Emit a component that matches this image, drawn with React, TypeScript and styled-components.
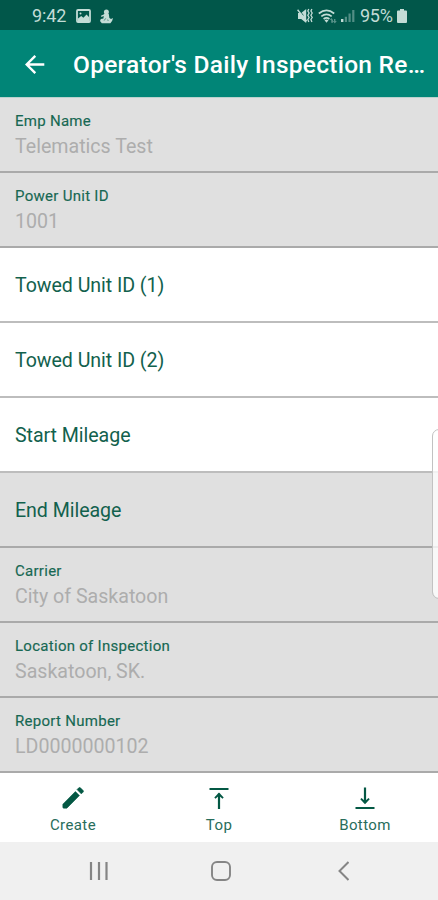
import React from 'react';
import styled, { createGlobalStyle } from 'styled-components';

const GlobalStyle = createGlobalStyle`
  * { box-sizing: border-box; }
  body { margin: 0; font-family: Roboto, "Liberation Sans", sans-serif; background: #fff; }
`;

const Screen = styled.div`
  position: relative;
  display: flex;
  flex-direction: column;
  width: 438px;
  height: 900px;
  overflow: hidden;
  background: #fff;
`;

const StatusBar = styled.div`
  display: flex;
  align-items: center;
  justify-content: space-between;
  height: 30px;
  padding: 2px 31px 0 32px;
  background: #01574a;
  color: #c3dcd6;
  font-size: 18px;
  line-height: 28px;
`;

const StatusGroup = styled.div`
  display: flex;
  align-items: center;
`;

const StatusIcon = styled.svg<{ $gap: number }>`
  display: block;
  flex: none;
  margin-left: ${(p) => p.$gap}px;
`;

const Clock = styled.span`
  width: 35px;
  letter-spacing: -0.1px;
`;

const Percent = styled.span`
  margin-left: 5px;
  width: 34px;
  letter-spacing: -0.3px;
`;

const AppBar = styled.header`
  display: flex;
  align-items: center;
  height: 68px;
  padding: 2px 0 0 25px;
  background: #018577;
  border-bottom: 1px solid #b9d2ce;
  color: #fff;
`;

const Title = styled.h1`
  margin: 0 0 0 28px;
  font-size: 24.5px;
  font-weight: 500;
  line-height: 32px;
  letter-spacing: 0.26px;
  white-space: nowrap;
`;

const Row = styled.div<{ $disabled?: boolean; $filled?: boolean }>`
  display: flex;
  flex-direction: column;
  justify-content: ${(p) => (p.$filled ? 'flex-start' : 'center')};
  height: 75px;
  flex: none;
  padding: ${(p) => (p.$filled ? '13px 15px 0' : '2px 15px 0')};
  border-bottom: 2px solid ${(p) => (p.$disabled ? '#aaaaaa' : '#bdbdbd')};
  background: ${(p) => (p.$disabled ? '#e0e0e0' : '#fff')};
`;

const Caption = styled.span`
  font-size: 15px;
  line-height: 20px;
  letter-spacing: 0.28px;
  color: #176853;
  -webkit-text-stroke: 0.15px #176853;
`;

const Value = styled.span`
  margin-top: 3px;
  font-size: 19.6px;
  line-height: 26px;
  letter-spacing: 0;
  color: #adadad;
`;

const Prompt = styled.span`
  font-size: 19.6px;
  line-height: 26px;
  letter-spacing: -0.05px;
  color: #12614d;
`;

const TabBar = styled.nav`
  display: grid;
  grid-template-columns: repeat(3, 1fr);
  height: 69px;
  padding-top: 11px;
  flex: none;
`;

const Tab = styled.div`
  display: flex;
  flex-direction: column;
  align-items: center;
  color: #045844;
  font-size: 15px;
  line-height: 20px;
  letter-spacing: 0.4px;
`;

const TabLabel = styled.span`
  margin-top: 3px;
  color: #286d5b;
`;

const SystemNav = styled.div`
  display: grid;
  grid-template-columns: 122px 122px 122px;
  justify-content: center;
  justify-items: center;
  align-items: center;
  flex: 1;
  padding: 0 0 1px 4px;
  background: #f0f0f0;
  color: #858585;
`;

const EdgeHandle = styled.div`
  position: absolute;
  top: 429px;
  right: -8px;
  width: 14px;
  height: 170px;
  border: 1.5px solid #c2c2c2;
  border-radius: 7px;
  background: rgba(255, 255, 255, 0.78);
  background-clip: padding-box;
`;

type Field = { label: string; value?: string; disabled?: boolean };

const fields: Field[] = [
  { label: 'Emp Name', value: 'Telematics Test', disabled: true },
  { label: 'Power Unit ID', value: '1001', disabled: true },
  { label: 'Towed Unit ID (1)' },
  { label: 'Towed Unit ID (2)' },
  { label: 'Start Mileage' },
  { label: 'End Mileage', disabled: true },
  { label: 'Carrier', value: 'City of Saskatoon', disabled: true },
  { label: 'Location of Inspection', value: 'Saskatoon, SK.', disabled: true },
  { label: 'Report Number', value: 'LD0000000102', disabled: true },
];

const PictureIcon = () => (
  <StatusIcon $gap={9} width="15" height="14" viewBox="0 0 15 14">
    <rect x="1" y="1" width="13" height="12" rx="1" fill="none" stroke="currentColor" strokeWidth="1.8" />
    <path d="M2 11V9.5L5.2 7l2.2 1.7L10.5 5.5 13 8v4H2z" fill="currentColor" />
    <circle cx="4.5" cy="4.5" r="1" fill="currentColor" />
  </StatusIcon>
);

const FigureIcon = () => (
  <StatusIcon $gap={9} width="13" height="15" viewBox="0 0 13 15" fill="currentColor">
    <circle cx="6.4" cy="2.9" r="2.5" />
    <path d="M4 5h4.8l.6 4 1.6.9 2-.8-.8 2.6-1.8 2.5H1.8L0 12l.8-2 2.6-.6z" />
    <path d="M1.2 7.4 4.5 5.8" stroke="currentColor" strokeWidth="1.5" />
    <path d="m5.7 9.4-1.6 2.2M7.7 10.6l.5 1.3" stroke="#01574a" strokeWidth=".6" />
  </StatusIcon>
);

const MuteIcon = () => (
  <StatusIcon $gap={0} width="17" height="16" viewBox="0 0 17 16">
    <path d="M1 5h3.2L9.2 1v14l-5-4H1z" fill="currentColor" />
    <path d="m1.4 1.2 5 6.2" stroke="#01574a" strokeWidth="1" />
    <path d="m.6 1.8 9 11.4" stroke="currentColor" strokeWidth="1.4" />
    <path d="m11.8 1-1 2 1.3 2-1.3 2.3 1.3 2.2-1.3 2 1 2.5M14.9 1l-1 2 1.3 2-1.3 2.3 1.3 2.2-1.3 2 1 2.5" fill="none" stroke="currentColor" strokeWidth="1.3" />
  </StatusIcon>
);

const WifiIcon = () => (
  <StatusIcon $gap={4} width="20" height="15" viewBox="0 0 20 15">
    <g fill="none" stroke="currentColor" strokeWidth="1.7">
      <path d="M.8 4.5Q8.5-1.8 16.2 4.5M3.3 7.4q5.2-4 10.4 0M5.6 10q2.9-2.3 5.8 0" />
    </g>
    <path d="M6.5 11.2q2-1.4 4 0l-2 2.5z" fill="currentColor" />
    <path d="m11.8 11 1.6-2 1.6 2v2.8h-1.8V11zm4.2-1h1.4v2.1h1.4l-2 2.4-2-2.4H16z" fill="currentColor" opacity=".45" />
  </StatusIcon>
);

const SignalIcon = () => (
  <StatusIcon $gap={3} width="14" height="14" viewBox="0 0 14 14" fill="currentColor">
    <path d="M0 10h2.4v3H0z" />
    <path d="M3.8 7.8H6V13H3.8zM7.5 4.5h2.2V13H7.5zM11.2 1h2.2v12h-2.2z" opacity=".42" />
  </StatusIcon>
);

const BatteryIcon = () => (
  <StatusIcon $gap={3} width="10" height="14" viewBox="0 0 10 14" fill="currentColor">
    <path d="M3 0h4v1.4h2q1 0 1 1V13q0 1-1 1H1q-1 0-1-1V2.4q0-1 1-1h2z" />
  </StatusIcon>
);

const BackArrow = () => (
  <svg width="20" height="20" viewBox="0 0 20 20" fill="none" stroke="currentColor" strokeWidth="2.4">
    <path d="M19.3 9.5H2M10.3.9 1.7 9.5l8.6 8.6" />
  </svg>
);

const EditIcon = () => (
  <svg width="28" height="28" viewBox="0 0 24 24" fill="currentColor" stroke="currentColor" strokeWidth=".5">
    <path d="M20.71 7.04c.39-.39.39-1.04 0-1.41l-2.34-2.34c-.37-.39-1.02-.39-1.41 0l-1.5 1.5 3.75 3.75M3.3 17.25V20q0 .7.7.7h2.75L17.5 9.93l-3.45-3.45z" />
  </svg>
);

const TopIcon = () => (
  <svg width="28" height="28" viewBox="0 0 28 28">
    <path d="M4.5 5h19M14 25V9.5" fill="none" stroke="currentColor" strokeWidth="2.2" />
    <path d="m9.3 13.5 4.7-5 4.7 5-1.2 1.2L14 11.8l-3.5 2.9z" fill="currentColor" />
  </svg>
);

const BottomIcon = () => (
  <svg width="28" height="28" viewBox="0 0 28 28">
    <path d="M4.5 24h19M14 3.5V19" fill="none" stroke="currentColor" strokeWidth="2.2" />
    <path d="m9.3 15.3 4.7 5 4.7-5-1.2-1.2L14 17l-3.5-2.9z" fill="currentColor" />
  </svg>
);

export default function App() {
  return (
    <>
      <GlobalStyle />
      <Screen>
        <StatusBar>
          <StatusGroup>
            <Clock>9:42</Clock>
            <PictureIcon />
            <FigureIcon />
          </StatusGroup>
          <StatusGroup>
            <MuteIcon />
            <WifiIcon />
            <SignalIcon />
            <Percent>95%</Percent>
            <BatteryIcon />
          </StatusGroup>
        </StatusBar>
        <AppBar>
          <BackArrow />
          <Title>Operator's Daily Inspection Re…</Title>
        </AppBar>
        <main>
          {fields.map((field) => (
            <Row key={field.label} $disabled={field.disabled} $filled={!!field.value}>
              {field.value ? (
                <>
                  <Caption>{field.label}</Caption>
                  <Value>{field.value}</Value>
                </>
              ) : (
                <Prompt>{field.label}</Prompt>
              )}
            </Row>
          ))}
        </main>
        <TabBar>
          <Tab><EditIcon /><TabLabel>Create</TabLabel></Tab>
          <Tab><TopIcon /><TabLabel>Top</TabLabel></Tab>
          <Tab><BottomIcon /><TabLabel>Bottom</TabLabel></Tab>
        </TabBar>
        <SystemNav>
          <svg width="20" height="20" viewBox="0 0 20 20">
            <path d="M2 1v18M10 1v18M17.5 1v18" stroke="currentColor" strokeWidth="2.2" />
          </svg>
          <svg width="20" height="20" viewBox="0 0 20 20">
            <rect x="1" y="1" width="18" height="18" rx="5" fill="none" stroke="currentColor" strokeWidth="1.9" />
          </svg>
          <svg width="12" height="20" viewBox="0 0 12 20">
            <path d="M11.5 1 2.5 10l9 9" fill="none" stroke="currentColor" strokeWidth="2" />
          </svg>
        </SystemNav>
        <EdgeHandle />
      </Screen>
    </>
  );
}
